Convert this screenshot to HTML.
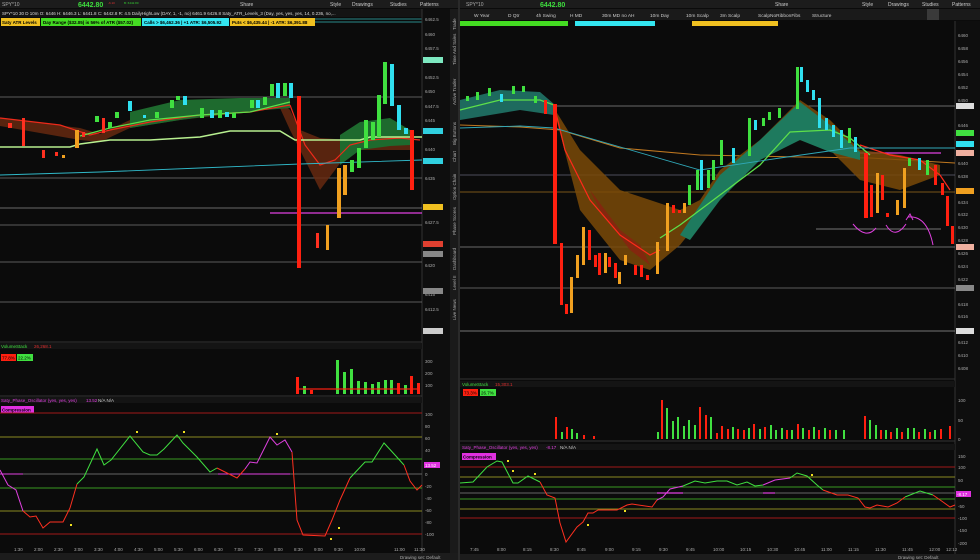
<!DOCTYPE html>
<html><head><meta charset="utf-8"><style>
body{margin:0;width:980px;height:560px;overflow:hidden;background:#0b0b0b;font-family:"Liberation Sans",sans-serif;}
svg{display:block}
text{font-family:"Liberation Sans",sans-serif}
</style></head><body>
<svg width="980" height="560" viewBox="0 0 980 560" xmlns="http://www.w3.org/2000/svg">
<rect width="980" height="560" fill="#0b0b0b"/>
<!-- top bars -->
<rect x="0" y="0" width="458" height="8" fill="#1c1c1c"/>
<rect x="460" y="0" width="520" height="8" fill="#1c1c1c"/>
<text x="2" y="6" font-size="5" fill="#aaa">SPY*10</text>
<text x="78" y="7" font-size="7" fill="#3ddc3d" font-weight="bold">6442.80</text>
<text x="108" y="4" font-size="3" fill="#d33">-6.10</text>
<text x="124" y="4" font-size="3" fill="#3c3">B: 6442.80</text>
<text x="240" y="6" font-size="5" fill="#ccc">Share</text><text x="330" y="6" font-size="5" fill="#ccc">Style</text><text x="352" y="6" font-size="5" fill="#ccc">Drawings</text><text x="390" y="6" font-size="5" fill="#ccc">Studies</text><text x="420" y="6" font-size="5" fill="#ccc">Patterns</text>
<text x="466" y="6" font-size="5" fill="#aaa">SPY*10</text>
<text x="540" y="7" font-size="7" fill="#3ddc3d" font-weight="bold">6442.80</text>
<text x="775" y="6" font-size="5" fill="#ccc">Share</text><text x="862" y="6" font-size="5" fill="#ccc">Style</text><text x="888" y="6" font-size="5" fill="#ccc">Drawings</text><text x="922" y="6" font-size="5" fill="#ccc">Studies</text><text x="952" y="6" font-size="5" fill="#ccc">Patterns</text>
<!-- left info row -->
<rect x="0" y="9" width="422" height="8" fill="#141414"/>
<text x="2" y="15" font-size="4.5" fill="#ddd">SPY*10 30 D 10m  O: 6446  H: 6446.3  L: 6441.8  C: 6442.8  R: 4.5   DailyHighLow (DAY, 1, -1, no)  6461.9  6426.8  Saty_ATR_Levels_3 (Day, yes, yes, yes, 14, 0.236, no,...</text>
<!-- left labels -->
<rect x="1" y="18" width="39" height="8" fill="#f0c020"/><text x="2" y="24" font-size="4.5" fill="#000" font-weight="bold">Saty ATR Levels</text>
<rect x="41" y="18" width="100" height="8" fill="#44dd22"/><text x="43" y="24" font-size="4.5" fill="#000" font-weight="bold">Day Range ($32.05) is 56% of ATR ($57.02)</text>
<rect x="142" y="18" width="87" height="8" fill="#33e5f0"/><text x="144" y="24" font-size="4.5" fill="#000" font-weight="bold">Calls &gt; $6,462.36 | +1 ATR: $6,505.92</text>
<rect x="230" y="18" width="85" height="8" fill="#f0c020"/><text x="232" y="24" font-size="4.5" fill="#000" font-weight="bold">Puts &lt; $6,435.44 | -1 ATR: $6,391.88</text>
<line x1="315" y1="19" x2="422" y2="19" stroke="#2a8a8a"/><line x1="315" y1="22" x2="422" y2="22" stroke="#2a8a8a"/>
<!-- left price axis -->
<rect x="422" y="9" width="28" height="545" fill="#0e0e0e"/><line x1="422" y1="9" x2="422" y2="553" stroke="#333"/>
<g font-size="4.5" fill="#aaa">
<text x="425" y="21">6462.5</text><text x="425" y="36">6460</text><text x="425" y="50">6457.5</text><text x="425" y="79">6452.5</text><text x="425" y="93">6450</text><text x="425" y="108">6447.5</text><text x="425" y="122">6445</text><text x="425" y="151">6440</text><text x="425" y="180">6435</text><text x="425" y="209">6430</text><text x="425" y="224">6427.5</text><text x="425" y="267">6420</text><text x="425" y="296">6415</text><text x="425" y="311">6412.5</text>
</g>
<rect x="423" y="57" width="20" height="6" fill="#7de8c0"/><rect x="423" y="128" width="20" height="6" fill="#30d0e0"/><rect x="423" y="158" width="20" height="6" fill="#30d0e0"/><rect x="423" y="204" width="20" height="6" fill="#f0c020"/><rect x="423" y="241" width="20" height="6" fill="#e04030"/><rect x="423" y="251" width="20" height="6" fill="#888"/><rect x="423" y="288" width="20" height="6" fill="#888"/><rect x="423" y="328" width="20" height="6" fill="#ccc"/>
<!-- side tabs -->
<rect x="450" y="9" width="8" height="545" fill="#1a1a1a"/>
<g font-size="4.5" fill="#aaa">
<text transform="translate(456,30) rotate(-90)">Trade</text><text transform="translate(456,65) rotate(-90)">Time And Sales</text><text transform="translate(456,105) rotate(-90)">Active Trader</text><text transform="translate(456,145) rotate(-90)">Big Buttons</text><text transform="translate(456,162) rotate(-90)">Chart</text><text transform="translate(456,200) rotate(-90)">Option Chain</text><text transform="translate(456,235) rotate(-90)">Phase Scores</text><text transform="translate(456,270) rotate(-90)">Dashboard</text><text transform="translate(456,290) rotate(-90)">Level II</text><text transform="translate(456,320) rotate(-90)">Live News</text>
</g>
<!-- left main lines -->
<g stroke-width="0.8">
<line x1="0" y1="97" x2="422" y2="97" stroke="#777"/>
<line x1="0" y1="178" x2="422" y2="178" stroke="#777"/>
<line x1="0" y1="208" x2="422" y2="208" stroke="#888"/>
<line x1="0" y1="225" x2="422" y2="225" stroke="#777"/>
<line x1="0" y1="262" x2="422" y2="262" stroke="#777"/>
<line x1="0" y1="302" x2="422" y2="302" stroke="#777"/>
<line x1="270" y1="213" x2="422" y2="213" stroke="#e040e0" stroke-width="1.2"/>
</g>
<path d="M0,118 L80,128 L100,134 L130,120 L180,112 L240,105 L280,100 L290,110 L300,130 L320,138 L350,140 L380,128 L410,136 L410,150 L380,150 L350,150 L320,190 L300,150 L290,130 L280,108 L240,113 L180,120 L130,128 L100,142 L80,140 L0,126Z" fill="#6b2a10" opacity="0.8"/>
<path d="M130,112 L180,100 L240,98 L290,98 L290,108 L240,112 L180,120 L130,128Z" fill="#1e6a2e"/>
<path d="M340,135 L360,122 L390,118 L410,130 L410,145 L390,146 L360,150 L340,165Z" fill="#1e6a2e"/>
<path d="M0,118 L60,125 L90,135 L110,130 L150,122 L200,115 L250,112 L290,105" stroke="#ee2a1a" stroke-width="1.2" fill="none"/>
<path d="M80,136 L110,128 L150,120 L200,115 L250,112 L290,102" stroke="#5de04a" stroke-width="1.2" fill="none"/>
<path d="M290,105 L305,145 L320,165 L335,160 L350,145 L370,140 L400,138 L420,140" stroke="#ee2a1a" stroke-width="1.2" fill="none"/>
<path d="M0,147 L70,147 L80,144 L110,140 L150,140 L200,137 L230,131 L280,131 L295,140 L360,140 L370,137 L422,137" stroke="#b8f090" stroke-width="1.6" fill="none"/>
<path d="M0,175 L100,172 L200,168 L300,164 L422,160" stroke="#30b8c8" stroke-width="0.9" fill="none"/>
<g>
<rect x="8" y="123" width="4" height="5" fill="#ff3020"/><rect x="22" y="118" width="3" height="28" fill="#ff3020"/>
<rect x="42" y="150" width="3" height="8" fill="#ff3020"/><rect x="55" y="152" width="3" height="4" fill="#ff3020"/><rect x="62" y="155" width="3" height="3" fill="#f0a020"/>
<rect x="75" y="130" width="4" height="18" fill="#f0a020"/><rect x="82" y="132" width="3" height="5" fill="#ff3020"/>
<rect x="95" y="116" width="4" height="6" fill="#40e040"/><rect x="102" y="118" width="3" height="15" fill="#ff3020"/><rect x="108" y="122" width="4" height="6" fill="#40e040"/>
<rect x="115" y="112" width="4" height="6" fill="#40e040"/><rect x="128" y="101" width="4" height="10" fill="#30e0f0"/>
<rect x="143" y="115" width="3" height="3" fill="#30e0f0"/><rect x="155" y="112" width="4" height="6" fill="#40e040"/>
<rect x="170" y="100" width="4" height="8" fill="#40e040"/><rect x="176" y="96" width="4" height="4" fill="#40e040"/><rect x="183" y="96" width="4" height="9" fill="#30e0f0"/>
<rect x="200" y="108" width="4" height="10" fill="#40e040"/><rect x="210" y="110" width="4" height="8" fill="#30e0f0"/><rect x="218" y="110" width="4" height="8" fill="#40e040"/><rect x="225" y="112" width="4" height="5" fill="#30e0f0"/><rect x="232" y="113" width="4" height="5" fill="#40e040"/>
<rect x="250" y="100" width="4" height="8" fill="#40e040"/><rect x="256" y="100" width="4" height="8" fill="#30e0f0"/><rect x="263" y="97" width="4" height="8" fill="#40e040"/>
<rect x="270" y="84" width="4" height="12" fill="#40e040"/><rect x="276" y="83" width="4" height="15" fill="#30e0f0"/><rect x="283" y="83" width="4" height="13" fill="#40e040"/><rect x="289" y="83" width="4" height="15" fill="#30e0f0"/>
<rect x="297" y="96" width="4" height="172" fill="#ff2010"/>
<rect x="316" y="233" width="3" height="15" fill="#ff3020"/><rect x="326" y="225" width="3" height="25" fill="#f0a020"/>
<rect x="337" y="168" width="4" height="50" fill="#f0a020"/><rect x="343" y="165" width="4" height="30" fill="#f0a020"/><rect x="350" y="160" width="4" height="12" fill="#40e040"/>
<rect x="357" y="148" width="4" height="20" fill="#40e040"/><rect x="364" y="120" width="4" height="28" fill="#40e040"/><rect x="371" y="122" width="4" height="18" fill="#40e040"/>
<rect x="377" y="95" width="4" height="42" fill="#40e040"/><rect x="383" y="62" width="4" height="42" fill="#40e040"/><rect x="390" y="64" width="4" height="42" fill="#30e0f0"/>
<rect x="397" y="105" width="4" height="25" fill="#30e0f0"/><rect x="404" y="128" width="4" height="6" fill="#30e0f0"/><rect x="410" y="130" width="4" height="60" fill="#ff2010"/>
</g>
<!-- left volume -->
<line x1="0" y1="342" x2="422" y2="342" stroke="#333"/>
<rect x="0" y="343" width="422" height="6" fill="#141414"/><text x="1" y="348" font-size="4.5" fill="#40e040">VolumeStack</text><text x="34" y="348" font-size="4.5" fill="#e03030">26,268.1</text>
<rect x="1" y="354" width="15" height="7" fill="#ff2010"/><text x="2" y="359.5" font-size="4.5" fill="#000">77.8%</text>
<rect x="17" y="354" width="16" height="7" fill="#40e040"/><text x="18" y="359.5" font-size="4.5" fill="#000">22.2%</text>
<g font-size="4.5" fill="#aaa"><text x="425" y="363">300</text><text x="425" y="375">200</text><text x="425" y="387">100</text></g>
<g>
<rect x="296" y="377" width="3" height="17" fill="#ff2010"/><rect x="303" y="386" width="3" height="8" fill="#40e040"/><rect x="310" y="390" width="3" height="4" fill="#ff2010"/>
<rect x="336" y="360" width="3" height="34" fill="#40e040"/><rect x="343" y="372" width="3" height="22" fill="#40e040"/><rect x="350" y="369" width="3" height="25" fill="#40e040"/><rect x="357" y="381" width="3" height="13" fill="#40e040"/><rect x="364" y="382" width="3" height="12" fill="#40e040"/><rect x="371" y="384" width="3" height="10" fill="#40e040"/><rect x="377" y="382" width="3" height="12" fill="#40e040"/><rect x="384" y="380" width="3" height="14" fill="#40e040"/><rect x="390" y="380" width="3" height="14" fill="#40e040"/><rect x="397" y="383" width="3" height="11" fill="#ff2010"/><rect x="404" y="385" width="3" height="9" fill="#40e040"/><rect x="410" y="376" width="3" height="18" fill="#ff2010"/><rect x="417" y="383" width="3" height="11" fill="#ff2010"/>
<rect x="296" y="388" width="124" height="2" fill="#ff2010" opacity="0.6"/>
</g>
<!-- left osc -->
<line x1="0" y1="396" x2="422" y2="396" stroke="#333"/>
<rect x="0" y="397" width="422" height="6" fill="#141414"/><text x="1" y="402" font-size="4.5" fill="#e040e0">Saty_Phase_Oscillator (yes, yes, yes)</text><text x="86" y="402" font-size="4.5" fill="#e040e0">13.52</text><text x="98" y="402" font-size="4.5" fill="#ccc">N/A  N/A</text>
<rect x="1" y="406" width="33" height="7" fill="#e030e0"/><text x="2" y="411.5" font-size="4.5" fill="#000" font-weight="bold">Compression</text>
<g stroke-width="0.9">
<line x1="0" y1="413" x2="422" y2="413" stroke="#a01818"/><line x1="0" y1="437" x2="422" y2="437" stroke="#8a8a20"/><line x1="0" y1="459" x2="422" y2="459" stroke="#3a9a20"/><line x1="0" y1="474" x2="422" y2="474" stroke="#666"/><line x1="0" y1="488" x2="422" y2="488" stroke="#3a9a20"/><line x1="0" y1="511" x2="422" y2="511" stroke="#8a8a20"/><line x1="0" y1="534" x2="422" y2="534" stroke="#a01818"/>
</g>
<line x1="0" y1="474" x2="23" y2="474" stroke="#e040e0"/><line x1="218" y1="474" x2="290" y2="474" stroke="#e040e0"/>
<path d="M0,470 L8,485 L16,490 L23,511" stroke="#e040e0" fill="none"/>
<path d="M23,511 L30,517 L36,516 L43,528 L50,522 L63,522 L70,508 L77,484" stroke="#ff3020" fill="none"/>
<path d="M77,484 L84,477 L97,449 L104,465 L111,460 L130,436 L143,452 L150,455 L157,455 L164,449 L177,435 L183,443 L197,457 L210,472 L217,468" stroke="#40e040" fill="none"/>
<path d="M217,468 L237,478 L245,469" stroke="#ff3020" fill="none"/>
<path d="M245,469 L250,462 L257,463 L270,437 L277,445 L285,440 L292,452" stroke="#e040e0" fill="none"/>
<path d="M292,452 L297,520 L303,535 L325,536 L332,520 L340,500 L350,478" stroke="#ff3020" fill="none"/>
<path d="M350,478 L365,462 L372,462 L384,443 L395,455 L404,465" stroke="#40e040" fill="none"/>
<path d="M404,465 L410,481 L417,490 L422,485" stroke="#ff3020" fill="none"/>
<g fill="#f0e020"><rect x="136" y="431" width="2" height="2"/><rect x="183" y="431" width="2" height="2"/><rect x="276" y="433" width="2" height="2"/><rect x="70" y="524" width="2" height="2"/><rect x="330" y="538" width="2" height="2"/><rect x="338" y="527" width="2" height="2"/></g>
<g font-size="4.5" fill="#aaa"><text x="425" y="416">100</text><text x="425" y="428">80</text><text x="425" y="440">60</text><text x="425" y="452">40</text><text x="425" y="476">0</text><text x="425" y="488">-20</text><text x="425" y="500">-40</text><text x="425" y="512">-60</text><text x="425" y="524">-80</text><text x="425" y="536">-100</text></g>
<rect x="424" y="462" width="16" height="6" fill="#e030e0"/><text x="425" y="467" font-size="4.5" fill="#fff">13.52</text>
<g font-size="4.5" fill="#aaa"><text x="14" y="551">1:30</text><text x="34" y="551">2:00</text><text x="54" y="551">2:30</text><text x="74" y="551">3:00</text><text x="94" y="551">3:30</text><text x="114" y="551">4:00</text><text x="134" y="551">4:30</text><text x="154" y="551">5:00</text><text x="174" y="551">5:30</text><text x="194" y="551">6:00</text><text x="214" y="551">6:30</text><text x="234" y="551">7:00</text><text x="254" y="551">7:30</text><text x="274" y="551">8:00</text><text x="294" y="551">8:30</text><text x="314" y="551">9:00</text><text x="334" y="551">9:30</text><text x="354" y="551">10:00</text><text x="394" y="551">11:00</text><text x="414" y="551">11:30</text></g>
<rect x="0" y="553" width="458" height="7" fill="#1c1c1c"/><text x="400" y="559" font-size="4.5" fill="#aaa">Drawing set: Default</text>

<!-- RIGHT PANEL -->
<rect x="458" y="0" width="2" height="560" fill="#2a2a2a"/>
<rect x="460" y="9" width="520" height="11" fill="#1a1a1a"/>
<g font-size="4.8" fill="#ccc"><text x="474" y="17">W Year</text><text x="508" y="17">D Qtr</text><text x="536" y="17">4h Swing</text><text x="570" y="17">H MD</text><text x="602" y="17">30m MD no AH</text><text x="650" y="17">10m Day</text><text x="686" y="17">10m Scalp</text><text x="720" y="17">3m Scalp</text><text x="758" y="17">ScalpNoRibbonFibs</text><text x="812" y="17">Structure</text></g>
<rect x="927" y="9" width="12" height="11" fill="#3a3a3a"/>
<rect x="460" y="21" width="108" height="5" fill="#44dd22"/><rect x="575" y="21" width="80" height="5" fill="#33e5f0"/><rect x="692" y="21" width="86" height="5" fill="#f0c020"/>
<rect x="955" y="21" width="25" height="539" fill="#0e0e0e"/><line x1="955" y1="21" x2="955" y2="560" stroke="#333"/>
<g font-size="4.5" fill="#aaa"><text x="958" y="37">6460</text><text x="958" y="50">6458</text><text x="958" y="63">6456</text><text x="958" y="76">6454</text><text x="958" y="89">6452</text><text x="958" y="102">6450</text><text x="958" y="127">6446</text><text x="958" y="165">6440</text><text x="958" y="178">6438</text><text x="958" y="204">6434</text><text x="958" y="216">6432</text><text x="958" y="229">6430</text><text x="958" y="242">6428</text><text x="958" y="255">6426</text><text x="958" y="268">6424</text><text x="958" y="281">6422</text><text x="958" y="306">6418</text><text x="958" y="318">6416</text><text x="958" y="344">6412</text><text x="958" y="357">6410</text><text x="958" y="370">6408</text></g>
<rect x="956" y="103" width="18" height="6" fill="#ddd"/><rect x="956" y="130" width="18" height="6" fill="#40e040"/><rect x="956" y="141" width="18" height="6" fill="#30e0f0"/><rect x="956" y="150" width="18" height="6" fill="#f0b0a0"/><rect x="956" y="188" width="18" height="6" fill="#f0a020"/><rect x="956" y="244" width="18" height="6" fill="#f0b0a0"/><rect x="956" y="285" width="18" height="6" fill="#888"/><rect x="956" y="328" width="18" height="6" fill="#ddd"/>
<g stroke-width="0.8">
<line x1="460" y1="106" x2="955" y2="106" stroke="#888"/><line x1="460" y1="175" x2="955" y2="175" stroke="#667"/><line x1="460" y1="247" x2="955" y2="247" stroke="#888"/><line x1="460" y1="288" x2="955" y2="288" stroke="#777"/><line x1="460" y1="331" x2="955" y2="331" stroke="#999"/>
<line x1="460" y1="192" x2="955" y2="192" stroke="#a07020"/>
<line x1="834" y1="153" x2="941" y2="153" stroke="#e040e0" stroke-width="1.2"/>
<line x1="816" y1="229" x2="941" y2="229" stroke="#999"/>
</g>
<path d="M460,125 L520,127 L560,130 L620,148 L700,155 L800,157 L870,158 L955,163" stroke="#c07820" stroke-width="1" fill="none"/>
<path d="M554,108 L580,150 L620,190 L650,200 L680,210 L700,200 L720,170 L760,140 L800,100 L830,120 L860,150 L900,155 L940,165 L940,175 L900,190 L860,180 L830,150 L800,140 L760,155 L720,190 L700,220 L680,245 L650,270 L620,260 L580,210 L554,110Z" fill="#7a4a08" opacity="0.85"/>
<path d="M570,150 L600,210 L630,250 L650,265 L640,245 L620,230 L590,190Z" fill="#8a2010" opacity="0.8"/>
<path d="M460,100 L500,90 L540,92 L554,104 L554,115 L520,110 L460,120Z" fill="#1e6a5e"/>
<path d="M680,235 L720,175 L760,140 L800,102 L830,125 L860,152 L860,160 L830,152 L800,140 L760,160 L720,200 L690,240Z" fill="#1e7a5e"/>
<path d="M460,110 L500,100 L540,100 L554,105" stroke="#5de04a" stroke-width="1.2" fill="none"/>
<path d="M554,105 L565,150 L590,200 L620,235 L650,255 L660,250" stroke="#ff2a1a" stroke-width="1.2" fill="none"/>
<path d="M660,238 L680,225 L720,195 L760,165 L790,132 L830,130 L850,138 L870,155" stroke="#5de04a" stroke-width="1.3" fill="none"/>
<path d="M860,145 L890,155 L920,160 L940,175 L950,190" stroke="#ff2a1a" stroke-width="1.2" fill="none"/>
<path d="M460,128 L520,126 L554,128 L700,170 L780,158 L850,148 L955,148" stroke="#30a8b8" stroke-width="0.9" fill="none"/>
<g>
<rect x="466" y="96" width="3" height="5" fill="#40e040"/><rect x="476" y="92" width="3" height="8" fill="#40e040"/><rect x="488" y="88" width="3" height="8" fill="#40e040"/><rect x="500" y="94" width="3" height="8" fill="#30e0f0"/><rect x="512" y="86" width="3" height="8" fill="#40e040"/><rect x="522" y="86" width="3" height="6" fill="#40e040"/><rect x="534" y="96" width="3" height="7" fill="#40e040"/>
<rect x="544" y="100" width="3" height="14" fill="#ff2010"/><rect x="553" y="104" width="4" height="140" fill="#ff2010"/>
<rect x="560" y="243" width="3" height="62" fill="#ff2010"/><rect x="565" y="304" width="3" height="10" fill="#ff2010"/><rect x="570" y="277" width="3" height="36" fill="#f0a020"/><rect x="576" y="255" width="3" height="23" fill="#f0a020"/><rect x="582" y="227" width="3" height="38" fill="#f0a020"/><rect x="588" y="230" width="3" height="30" fill="#ff2010"/><rect x="594" y="255" width="3" height="12" fill="#ff2010"/><rect x="598" y="253" width="3" height="22" fill="#ff2010"/><rect x="604" y="253" width="3" height="20" fill="#f0a020"/><rect x="608" y="257" width="3" height="10" fill="#ff2010"/><rect x="614" y="263" width="3" height="15" fill="#ff2010"/><rect x="618" y="272" width="3" height="12" fill="#f0a020"/><rect x="624" y="255" width="3" height="10" fill="#f0a020"/><rect x="634" y="265" width="3" height="10" fill="#ff2010"/><rect x="640" y="265" width="3" height="12" fill="#ff2010"/><rect x="646" y="275" width="3" height="5" fill="#ff2010"/><rect x="656" y="242" width="3" height="32" fill="#f0a020"/><rect x="666" y="203" width="3" height="48" fill="#f0a020"/><rect x="672" y="205" width="3" height="8" fill="#ff2010"/><rect x="678" y="210" width="3" height="3" fill="#ff2010"/><rect x="683" y="203" width="3" height="10" fill="#f0a020"/>
<rect x="688" y="185" width="3" height="20" fill="#40e040"/><rect x="696" y="170" width="3" height="20" fill="#40e040"/><rect x="700" y="160" width="3" height="30" fill="#30e0f0"/><rect x="707" y="170" width="3" height="18" fill="#40e040"/><rect x="712" y="160" width="3" height="20" fill="#40e040"/><rect x="720" y="140" width="3" height="25" fill="#40e040"/><rect x="732" y="148" width="3" height="15" fill="#30e0f0"/>
<rect x="748" y="118" width="3" height="38" fill="#40e040"/><rect x="754" y="120" width="3" height="10" fill="#30e0f0"/><rect x="762" y="118" width="3" height="8" fill="#40e040"/><rect x="768" y="112" width="3" height="8" fill="#40e040"/><rect x="778" y="108" width="3" height="10" fill="#40e040"/><rect x="796" y="67" width="3" height="42" fill="#40e040"/><rect x="800" y="67" width="3" height="15" fill="#30e0f0"/><rect x="806" y="80" width="3" height="12" fill="#30e0f0"/><rect x="812" y="90" width="3" height="10" fill="#30e0f0"/><rect x="818" y="98" width="3" height="30" fill="#30e0f0"/><rect x="825" y="118" width="3" height="12" fill="#30e0f0"/><rect x="832" y="125" width="3" height="12" fill="#30e0f0"/><rect x="840" y="130" width="3" height="18" fill="#30e0f0"/><rect x="848" y="128" width="3" height="15" fill="#40e040"/><rect x="854" y="137" width="3" height="15" fill="#30e0f0"/>
<rect x="864" y="153" width="4" height="65" fill="#ff2010"/><rect x="870" y="185" width="3" height="32" fill="#ff2010"/><rect x="876" y="173" width="3" height="40" fill="#f0a020"/><rect x="881" y="175" width="3" height="25" fill="#ff2010"/><rect x="886" y="213" width="3" height="4" fill="#ff2010"/><rect x="896" y="200" width="3" height="15" fill="#f0a020"/><rect x="903" y="168" width="3" height="40" fill="#f0a020"/><rect x="908" y="158" width="3" height="8" fill="#40e040"/><rect x="918" y="158" width="3" height="12" fill="#30e0f0"/><rect x="926" y="160" width="3" height="15" fill="#40e040"/><rect x="934" y="165" width="3" height="20" fill="#ff2010"/><rect x="941" y="183" width="3" height="12" fill="#ff2010"/><rect x="946" y="196" width="3" height="30" fill="#ff2010"/><rect x="951" y="226" width="3" height="18" fill="#ff2010"/>
</g>
<path d="M853,224 Q866,240 876,228 M886,225 Q895,240 906,224 M908,217 Q927,215 933,245" stroke="#e040e0" stroke-width="1" fill="none"/>
<path d="M906,220 L910,214 L913,220" stroke="#e040e0" stroke-width="1" fill="none"/>
<!-- right volume -->
<line x1="460" y1="379" x2="955" y2="379" stroke="#333"/>
<rect x="460" y="381" width="495" height="6" fill="#141414"/><text x="462" y="386" font-size="4.5" fill="#40e040">VolumeStack</text><text x="495" y="386" font-size="4.5" fill="#e03030">15,303.1</text>
<rect x="463" y="389" width="15" height="7" fill="#ff2010"/><text x="464" y="394.5" font-size="4.5" fill="#000">73.3%</text><rect x="480" y="389" width="16" height="7" fill="#40e040"/><text x="481" y="394.5" font-size="4.5" fill="#000">26.7%</text>
<g font-size="4.5" fill="#aaa"><text x="958" y="402">100</text><text x="958" y="422">50</text><text x="958" y="441">0</text></g>
<g fill="#ff2010">
<rect x="555" y="417" width="2" height="22"/><rect x="566" y="427" width="2" height="12"/><rect x="583" y="435" width="2" height="4"/><rect x="593" y="436" width="2" height="3"/>
<rect x="661" y="400" width="2" height="39"/><rect x="699" y="415" width="2" height="24"/><rect x="699" y="407" width="2" height="8"/><rect x="705" y="415" width="2" height="24"/><rect x="716" y="433" width="2" height="6"/><rect x="721" y="426" width="2" height="13"/><rect x="727" y="429" width="2" height="10"/><rect x="737" y="429" width="2" height="10"/><rect x="743" y="430" width="2" height="9"/><rect x="753" y="424" width="2" height="15"/><rect x="764" y="427" width="2" height="12"/><rect x="786" y="430" width="2" height="9"/><rect x="797" y="424" width="2" height="15"/><rect x="808" y="430" width="2" height="9"/><rect x="818" y="430" width="2" height="9"/><rect x="829" y="430" width="2" height="9"/><rect x="864" y="416" width="2" height="23"/><rect x="880" y="430" width="2" height="9"/><rect x="890" y="432" width="2" height="7"/><rect x="901" y="432" width="2" height="7"/><rect x="918" y="432" width="2" height="7"/><rect x="929" y="432" width="2" height="7"/><rect x="940" y="429" width="2" height="10"/><rect x="949" y="426" width="2" height="13"/>
</g>
<g fill="#40e040">
<rect x="561" y="432" width="2" height="7"/><rect x="571" y="429" width="2" height="10"/><rect x="576" y="433" width="2" height="6"/><rect x="657" y="432" width="2" height="7"/><rect x="666" y="408" width="2" height="31"/><rect x="672" y="421" width="2" height="18"/><rect x="677" y="417" width="2" height="22"/><rect x="683" y="426" width="2" height="13"/><rect x="688" y="420" width="2" height="19"/><rect x="694" y="425" width="2" height="14"/><rect x="710" y="417" width="2" height="22"/><rect x="732" y="427" width="2" height="12"/><rect x="748" y="428" width="2" height="11"/><rect x="759" y="429" width="2" height="10"/><rect x="770" y="425" width="2" height="14"/><rect x="775" y="430" width="2" height="9"/><rect x="781" y="428" width="2" height="11"/><rect x="791" y="430" width="2" height="9"/><rect x="802" y="428" width="2" height="11"/><rect x="813" y="427" width="2" height="12"/><rect x="824" y="428" width="2" height="11"/><rect x="835" y="430" width="2" height="9"/><rect x="843" y="430" width="2" height="9"/><rect x="869" y="420" width="2" height="19"/><rect x="875" y="425" width="2" height="14"/><rect x="885" y="430" width="2" height="9"/><rect x="896" y="428" width="2" height="11"/><rect x="907" y="428" width="2" height="11"/><rect x="913" y="428" width="2" height="11"/><rect x="924" y="429" width="2" height="10"/><rect x="934" y="430" width="2" height="9"/>
</g>
<!-- right osc -->
<line x1="460" y1="441" x2="955" y2="441" stroke="#333"/>
<rect x="460" y="444" width="495" height="6" fill="#141414"/><text x="462" y="449" font-size="4.5" fill="#e040e0">Saty_Phase_Oscillator (yes, yes, yes)</text><text x="546" y="449" font-size="4.5" fill="#e040e0">-8.17</text><text x="560" y="449" font-size="4.5" fill="#ccc">N/A  N/A</text>
<rect x="462" y="453" width="34" height="7" fill="#e030e0"/><text x="463" y="458.5" font-size="4.5" fill="#000" font-weight="bold">Compression</text>
<g stroke-width="0.9">
<line x1="460" y1="467" x2="955" y2="467" stroke="#a01818"/><line x1="460" y1="477" x2="955" y2="477" stroke="#8a8a20"/><line x1="460" y1="487" x2="955" y2="487" stroke="#3a9a20"/><line x1="460" y1="493" x2="955" y2="493" stroke="#666"/><line x1="460" y1="499" x2="955" y2="499" stroke="#3a9a20"/><line x1="460" y1="509" x2="955" y2="509" stroke="#8a8a20"/><line x1="460" y1="518" x2="955" y2="518" stroke="#a01818"/>
</g>
<line x1="657" y1="493" x2="683" y2="493" stroke="#e040e0" stroke-width="1.2"/><line x1="763" y1="493" x2="775" y2="493" stroke="#e040e0" stroke-width="1.2"/>
<path d="M460,483 L473,482 L487,467 L497,461 L502,462 L513,483 L518,483 L528,476 L540,482" stroke="#40e040" fill="none"/>
<path d="M540,482 L547,495 L555,498 L560,523 L566,542 L577,527 L583,522 L588,513 L593,513 L598,510 L607,510 L617,510 L627,505 L632,504 L652,507 L657,500" stroke="#ff3020" fill="none"/>
<path d="M657,500 L663,497 L670,489 L683,486" stroke="#e040e0" fill="none"/>
<path d="M683,486 L695,481 L705,483 L717,481 L727,481 L737,485 L747,482 L755,486 L763,485" stroke="#40e040" fill="none"/>
<path d="M763,485 L775,480 L790,478" stroke="#e040e0" fill="none"/>
<path d="M790,478 L797,473 L807,476 L817,485 L823,490" stroke="#40e040" fill="none"/>
<path d="M823,490 L837,495 L848,495 L858,498 L865,507 L870,508 L877,505 L888,507 L897,503 L905,497" stroke="#ff3020" fill="none"/>
<path d="M905,497 L920,491 L933,495" stroke="#40e040" fill="none"/>
<path d="M933,495 L943,502 L950,507 L955,505" stroke="#ff3020" fill="none"/>
<g fill="#f0e020"><rect x="507" y="460" width="2" height="2"/><rect x="512" y="470" width="2" height="2"/><rect x="534" y="473" width="2" height="2"/><rect x="587" y="524" width="2" height="2"/><rect x="624" y="510" width="2" height="2"/><rect x="811" y="474" width="2" height="2"/></g>
<g font-size="4.5" fill="#aaa"><text x="958" y="458">150</text><text x="958" y="469">100</text><text x="958" y="482">50</text><text x="958" y="508">-50</text><text x="958" y="520">-100</text><text x="958" y="532">-150</text><text x="958" y="545">-200</text></g>
<rect x="956" y="491" width="15" height="6" fill="#e030e0"/><text x="957" y="496" font-size="4.5" fill="#fff">-8.17</text>
<g font-size="4.5" fill="#aaa"><text x="470" y="551">7:45</text><text x="497" y="551">8:00</text><text x="523" y="551">8:15</text><text x="550" y="551">8:30</text><text x="577" y="551">8:45</text><text x="605" y="551">9:00</text><text x="632" y="551">9:15</text><text x="659" y="551">9:30</text><text x="686" y="551">9:45</text><text x="713" y="551">10:00</text><text x="740" y="551">10:15</text><text x="767" y="551">10:30</text><text x="794" y="551">10:45</text><text x="821" y="551">11:00</text><text x="848" y="551">11:15</text><text x="875" y="551">11:30</text><text x="902" y="551">11:45</text><text x="929" y="551">12:00</text><text x="946" y="551">12:12</text></g>
<rect x="460" y="554" width="520" height="6" fill="#1c1c1c"/><text x="898" y="559" font-size="4.5" fill="#aaa">Drawing set: Default</text>
</svg>
</body></html>
